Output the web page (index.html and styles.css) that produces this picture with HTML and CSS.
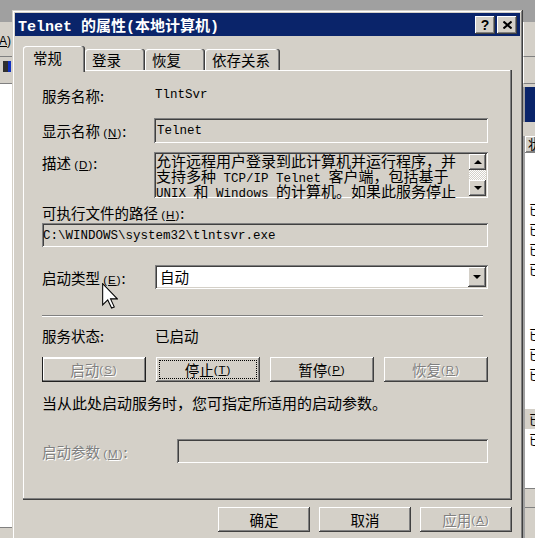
FILE: index.html
```html
<!DOCTYPE html>
<html lang="zh-CN">
<head>
<meta charset="utf-8">
<title>Telnet 的属性(本地计算机)</title>
<link rel="stylesheet" href="styles.css">
</head>
<body>
<div class="screen">
  <div class="side side-left">
    <div class="menubar"><span class="menu-text">(<u>A</u>)</span></div>
    <div class="toolbar"><span class="tool-icon"></span></div>
    <div class="pane-white"></div>
    <div class="statusbar"></div>
  </div>

  <div class="dialog-col">
    <div class="dialog">
      <div class="titlebar">
        <span class="title-text">Telnet 的属性(本地计算机)</span>
        <div class="title-btns">
          <span class="tbtn tbtn-help">?</span>
          <span class="tbtn tbtn-close">
            <svg width="9" height="8" viewBox="0 0 9 8"><path d="M0.5 0.5 L8.5 7.5 M8.5 0.5 L0.5 7.5" stroke="#000" stroke-width="2"/></svg>
          </span>
        </div>
      </div>
      <div class="dlg-body">
        <div class="tabs">
          <div class="tab tab-sel">常规</div>
          <div class="tab tab-2">登录</div>
          <div class="tab tab-2">恢复</div>
          <div class="tab tab-4">依存关系</div>
        </div>
        <div class="panel">
          <div class="row r-name">
            <span class="lbl">服务名称:</span>
            <span class="mono">TlntSvr</span>
          </div>
          <div class="row r-display">
            <span class="lbl lbl-f">显示名称 <span class="mn">(<u>N</u>)</span>:</span>
            <div class="field f-display"><span class="mono">Telnet</span></div>
          </div>
          <div class="row r-desc">
            <span class="lbl lbl-f">描述 <span class="mn">(<u>D</u>)</span>:</span>
            <div class="field desc">
              <div class="desc-text">
                <div class="desc-line">允许远程用户登录到此计算机并运行程序，并</div>
                <div class="desc-line">支持多种<span class="m"> TCP/IP Telnet </span>客户端，包括基于</div>
                <div class="desc-line"><span class="m">UNIX </span>和<span class="m"> Windows </span>的计算机。如果此服务停止</div>
              </div>
              <div class="scroll">
                <div class="sb-btn"><span class="arr-up"></span></div>
                <div class="sb-track"></div>
                <div class="sb-btn"><span class="arr-down"></span></div>
              </div>
            </div>
          </div>
          <div class="r-pathlabel">可执行文件的路径 <span class="mn">(<u>H</u>)</span>:</div>
          <div class="field f-path"><span class="mono">C:\WINDOWS\system32\tlntsvr.exe</span></div>
          <div class="row r-start">
            <span class="lbl">启动类型 <span class="mn">(<u>E</u>)</span>:</span>
            <div class="select">
              <span class="sel-text">自动</span>
              <span class="sel-btn"><span class="arr-down"></span></span>
            </div>
          </div>
          <div class="sep"></div>
          <div class="row r-status">
            <span class="lbl">服务状态:</span>
            <span>已启动</span>
          </div>
          <div class="r-btns">
            <div class="btn btn-default disabled">启动 <span class="mn">(<u>S</u>)</span></div>
            <div class="btn btn-focus">停止 <span class="mn">(<u>T</u>)</span></div>
            <div class="btn">暂停 <span class="mn">(<u>P</u>)</span></div>
            <div class="btn disabled">恢复 <span class="mn">(<u>R</u>)</span></div>
          </div>
          <div class="r-hint">当从此处启动服务时，您可指定所适用的启动参数。</div>
          <div class="row r-param">
            <span class="lbl lbl-wide disabled">启动参数 <span class="mn">(<u>M</u>)</span>:</span>
            <div class="field f-param"></div>
          </div>
        </div>
        <div class="footer">
          <div class="btn btn-foot">确定</div>
          <div class="btn btn-foot">取消</div>
          <div class="btn btn-foot disabled">应用 <span class="mn">(<u>A</u>)</span></div>
        </div>
      </div>
    </div>
  </div>

  <div class="side side-right">
    <div class="menubar"></div>
    <div class="toolbar"></div>
    <div class="rw-gap"></div>
    <div class="rw-blue"></div>
    <div class="rw-gap2"></div>
    <div class="rw-head">状态</div>
    <div class="rw-list">
      <div class="rw-sp1"></div>
      <div class="rw-row">已启动</div>
      <div class="rw-row">已启动</div>
      <div class="rw-row">已启动</div>
      <div class="rw-row">已启动</div>
      <div class="rw-sp2"></div>
      <div class="rw-row">已启动</div>
      <div class="rw-row">已启动</div>
      <div class="rw-row">已启动</div>
      <div class="rw-sp3"></div>
      <div class="rw-row rw-hl">已启动</div>
      <div class="rw-row">已启动</div>
    </div>
    <div class="rw-foot"></div>
  </div>

  <svg class="cursor" width="16" height="26" viewBox="0 0 12 19.5">
    <path d="M0.5 0.5 L0.5 16.5 L4.3 12.7 L7.2 18.8 L9.2 17.9 L6.4 11.9 L11.5 11.9 Z" fill="#fff" stroke="#000" stroke-width="0.8" stroke-linejoin="miter"/>
  </svg>
</div>
</body>
</html>
```

FILE: styles.css
```css
html, body {
  margin: 0;
  padding: 0;
}

body {
  background: #a0a0a0;
}

.screen {
  position: relative;
  width: 535px;
  height: 538px;
  overflow: hidden;
  display: flex;
  background: #a0a0a0;
  font-family: "Noto Sans CJK SC", "Noto Sans", sans-serif;
  font-size: 14.5px;
  color: #000;
}

/* ---------- background window strips ---------- */
.side {
  flex: none;
  width: 12px;
  padding-top: 22px;
  display: flex;
  flex-direction: column;
  overflow: hidden;
}

.menubar {
  height: 34px;
  background: #d4d0c8;
  border-bottom: 1px solid #808080;
  display: flex;
  justify-content: flex-end;
  align-items: center;
  overflow: hidden;
}

.menu-text {
  font-family: "Liberation Sans", sans-serif;
  font-size: 12px;
  white-space: nowrap;
  padding-top: 3px;
  margin-right: 1px;
}

.toolbar {
  height: 26px;
  background: #d4d0c8;
  border-bottom: 1px solid #808080;
  display: flex;
  align-items: flex-start;
  justify-content: flex-end;
}

.tool-icon {
  width: 8px;
  height: 11px;
  margin-top: 4px;
  margin-right: 1px;
  background: linear-gradient(90deg, #303030 0 5px, #1030c0 5px 8px);
}

.pane-white {
  height: 443px;
  background: #fff;
  border-bottom: 1px solid #808080;
}

.statusbar {
  flex: 1;
  background: #d4d0c8;
}

.side-right .menubar,
.side-right .toolbar {
  border-left: 1px solid #fff;
}

.rw-gap {
  height: 3px;
  background: #d4d0c8;
}

.rw-blue {
  height: 35px;
  margin-left: 2px;
  background: #0a246a;
}

.rw-gap2 {
  height: 14px;
  background: #d4d0c8;
}

.rw-head {
  height: 16px;
  margin-left: 2px;
  padding-left: 3px;
  background: #d4d0c8;
  box-shadow: inset 1px 1px 0 #fff, inset -1px -1px 0 #808080;
  font-size: 13px;
  line-height: 16px;
  white-space: nowrap;
}

.rw-list {
  height: 335px;
  margin-left: 2px;
  background: #fff;
  border-top: 1px solid #808080;
  overflow: hidden;
}

.rw-sp1 { height: 46px; }
.rw-sp2 { height: 45px; }
.rw-sp3 { height: 25px; }

.rw-row {
  height: 20px;
  line-height: 20px;
  padding-left: 4px;
  font-size: 13px;
  white-space: nowrap;
}

.rw-hl {
  background: #d4d0c8;
}

.rw-foot {
  flex: 1;
  margin-left: 2px;
  background: #d4d0c8;
  border-top: 1px solid #808080;
  box-shadow: inset 0 18px 0 #d4d0c8, inset 0 19px 0 #808080;
}

/* ---------- dialog ---------- */
.dialog-col {
  flex: none;
  width: 511px;
  padding-top: 10px;
  overflow: hidden;
}

.dialog {
  height: 560px;
  padding: 3px;
  background: #d4d0c8;
  box-shadow: inset -1px -1px 0 #404040, inset 1px 1px 0 #d4d0c8, inset -2px -2px 0 #808080, inset 2px 2px 0 #fff;
}

.titlebar {
  height: 23px;
  background: #0a246a;
  display: flex;
  align-items: center;
  padding: 0 3px;
}

.title-text {
  color: #fff;
  font-family: "Liberation Mono", "Noto Sans CJK SC", monospace;
  font-weight: bold;
  font-size: 15px;
  white-space: nowrap;
}

.title-btns {
  margin-left: auto;
  display: flex;
  gap: 2px;
}

.tbtn {
  width: 20px;
  height: 18px;
  background: #d4d0c8;
  box-shadow: inset -1px -1px 0 #404040, inset 1px 1px 0 #fff, inset -2px -2px 0 #808080;
  display: flex;
  align-items: center;
  justify-content: center;
}

.tbtn-help {
  font-family: "Liberation Sans", sans-serif;
  font-weight: bold;
  font-size: 14px;
  line-height: 18px;
}

.dlg-body {
  padding: 10px 8px 0 8px;
}

/* tabs */
.tabs {
  position: relative;
  z-index: 2;
  height: 24px;
  display: flex;
  align-items: flex-start;
}

.tab {
  box-sizing: border-box;
  height: 21px;
  margin-top: 3px;
  padding-left: 7px;
  line-height: 22px;
  white-space: nowrap;
  background: #d4d0c8;
  border-radius: 3px 3px 0 0;
  box-shadow: inset -1px 0 0 #404040, inset -2px 0 0 #808080, inset 1px 1px 0 #fff;
}

.tab-sel {
  width: 62px;
  height: 26px;
  margin-top: 0;
  padding-left: 10px;
  line-height: 24px;
}

.tab-2 { width: 60px; }
.tab-4 { width: 75px; }

/* panel */
.panel {
  box-sizing: border-box;
  height: 430px;
  padding: 14px 24px 0 19px;
  box-shadow: inset -1px -1px 0 #404040, inset -2px -2px 0 #808080, inset 1px 1px 0 #fff;
}

.row {
  display: flex;
  align-items: center;
}

.lbl {
  flex: none;
  width: 113px;
  white-space: nowrap;
}

.lbl-f { width: 112px; }
.lbl-wide { width: 135px; }

.mn {
  font-family: "Liberation Sans", sans-serif;
  font-size: 11.5px;
  letter-spacing: 1px;
}

.mono,
.m {
  font-family: "Liberation Mono", monospace;
  font-size: 12.5px;
  white-space: pre;
}

.field {
  box-sizing: border-box;
  background: #d4d0c8;
  box-shadow: inset 1px 1px 0 #808080, inset -1px -1px 0 #fff, inset 2px 2px 0 #404040, inset -2px -2px 0 #d4d0c8;
}

.r-name { height: 22px; }

.r-display {
  margin-top: 12px;
  height: 25px;
}

.f-display {
  width: 334px;
  height: 25px;
  padding: 3px 3px;
  line-height: 14px;
}

.r-desc {
  margin-top: 9px;
  align-items: flex-start;
}

.r-desc .lbl { line-height: 22px; }

.desc {
  width: 334px;
  height: 46px;
  padding: 1px 2px 0 2px;
  display: flex;
}

.desc-text {
  flex: 1;
  min-width: 0;
  font-size: 15px;
  white-space: nowrap;
}

.desc-line {
  height: 15px;
  line-height: 15px;
}

.scroll {
  flex: none;
  width: 17px;
  margin: 1px 0 2px 0;
  display: flex;
  flex-direction: column;
}

.sb-btn {
  height: 16px;
  background: #d4d0c8;
  box-shadow: inset -1px -1px 0 #404040, inset 1px 1px 0 #fff, inset -2px -2px 0 #808080;
  display: flex;
  align-items: center;
  justify-content: center;
}

.sb-track {
  flex: 1;
  background-color: #d4d0c8;
  background-image: repeating-conic-gradient(#ffffff 0 25%, #d4d0c8 0 50%);
  background-size: 2px 2px;
}

.arr-up {
  width: 0;
  height: 0;
  border-left: 4px solid transparent;
  border-right: 4px solid transparent;
  border-bottom: 4px solid #000;
}

.arr-down {
  width: 0;
  height: 0;
  border-left: 4px solid transparent;
  border-right: 4px solid transparent;
  border-top: 4px solid #000;
}

.r-pathlabel {
  margin-top: 7px;
  height: 16px;
  line-height: 16px;
  white-space: nowrap;
}

.f-path {
  margin-top: 2px;
  width: 446px;
  height: 24px;
  padding: 3px 1px;
  line-height: 14px;
  overflow: hidden;
}

.r-start {
  margin-top: 18px;
  height: 24px;
}

.select {
  box-sizing: border-box;
  width: 333px;
  height: 24px;
  padding: 2px;
  display: flex;
  background: #fff;
  box-shadow: inset 1px 1px 0 #808080, inset -1px -1px 0 #fff, inset 2px 2px 0 #404040, inset -2px -2px 0 #d4d0c8;
}

.sel-text {
  flex: 1;
  padding-left: 3px;
  line-height: 20px;
}

.sel-btn {
  width: 18px;
  height: 20px;
  background: #d4d0c8;
  box-shadow: inset -1px -1px 0 #404040, inset 1px 1px 0 #fff, inset -2px -2px 0 #808080;
  display: flex;
  align-items: center;
  justify-content: center;
}

.sep {
  margin-top: 26px;
  width: 441px;
  border-top: 1px solid #808080;
  border-bottom: 1px solid #fff;
}

.r-status {
  margin-top: 9px;
  height: 18px;
}

.r-btns {
  margin-top: 13px;
  display: grid;
  grid-template-columns: repeat(4, 104px);
  column-gap: 10px;
  height: 25px;
}

.btn {
  box-sizing: border-box;
  height: 25px;
  background: #d4d0c8;
  box-shadow: inset -1px -1px 0 #404040, inset 1px 1px 0 #fff, inset -2px -2px 0 #808080;
  display: flex;
  align-items: center;
  justify-content: center;
  white-space: nowrap;
}

.btn-default {
  box-shadow: inset -1px -1px 0 #202020, inset 1px 0 0 #202020, inset 0 1px 0 #fff, inset -2px -2px 0 #808080, inset 2px 2px 0 #fff;
}

.btn-focus {
  outline: 1px dotted #000;
  outline-offset: -4px;
}

.disabled {
  color: #808080;
  text-shadow: 1px 1px 0 #fff;
}

.r-hint {
  margin-top: 13px;
  height: 16px;
  line-height: 16px;
  font-size: 15px;
  white-space: nowrap;
}

.r-param {
  margin-top: 28px;
  height: 24px;
}

.f-param {
  width: 311px;
  height: 24px;
}

.footer {
  margin-top: 7px;
  display: flex;
  justify-content: flex-end;
  gap: 9px;
}

.btn-foot {
  width: 92px;
}

.cursor {
  position: absolute;
  left: 102px;
  top: 283px;
}
```
